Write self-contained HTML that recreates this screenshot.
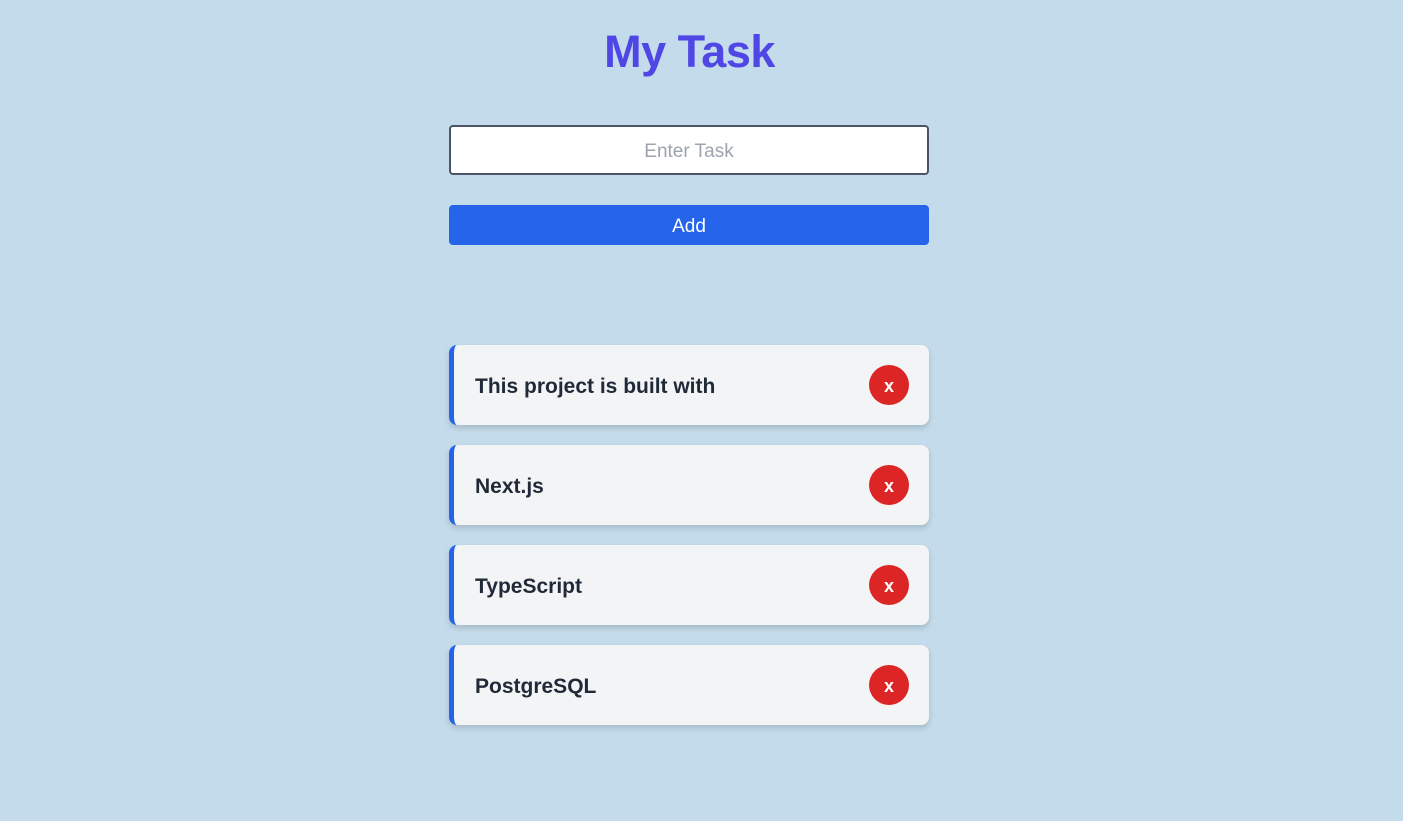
<!DOCTYPE html>
<html><head><meta charset="utf-8"><style>
*{box-sizing:border-box;margin:0;padding:0}
html,body{width:1403px;height:821px;background:#c3dbea;font-family:"Liberation Sans",sans-serif;overflow:hidden}
h1{position:absolute;left:0;width:1379px;text-align:center;top:26px;font-size:45px;font-weight:bold;color:#4f46e5;letter-spacing:-0.5px}
.input{position:absolute;left:449px;top:125px;width:480px;height:50px;background:#fff;border:2px solid #4b5563;border-radius:4px;text-align:center;line-height:50px;font-size:19px;color:#9ca3af}
.add{position:absolute;left:449px;top:205px;width:480px;height:40px;background:#2563eb;border-radius:4px;text-align:center;line-height:43px;font-size:19px;color:#fff}
.card{position:absolute;left:449px;width:480px;height:80px;background:#f3f4f6;border-left:5px solid #2563eb;border-radius:8px;box-shadow:0 3px 6px rgba(0,0,0,.15)}
.card span{position:absolute;left:21px;top:2px;line-height:80px;font-size:21px;font-weight:bold;color:#1f2937}
.card b{position:absolute;left:415px;top:20px;width:40px;height:40px;border-radius:50%;background:#dc2626;color:#fff;text-align:center;line-height:43px;font-size:18px}
</style></head><body>
<h1>My Task</h1>
<div class="input">Enter Task</div>
<div class="add">Add</div>
<div class="card" style="top:345px"><span>This project is built with</span><b>x</b></div>
<div class="card" style="top:445px"><span>Next.js</span><b>x</b></div>
<div class="card" style="top:545px"><span>TypeScript</span><b>x</b></div>
<div class="card" style="top:645px"><span>PostgreSQL</span><b>x</b></div>
</body></html>
